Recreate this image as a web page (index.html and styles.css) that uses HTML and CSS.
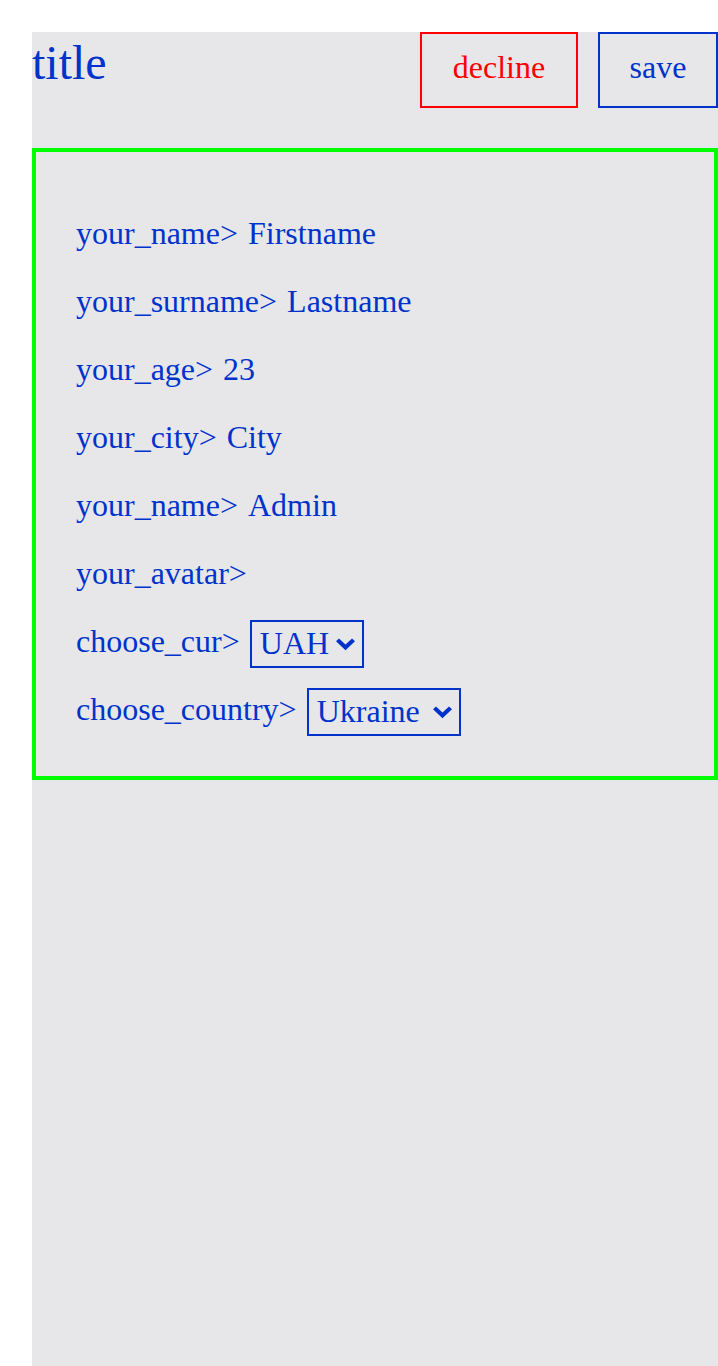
FILE: index.html
```html
<!DOCTYPE html>
<html>
<head>
<meta charset="utf-8">
<link rel="stylesheet" href="styles.css">
</head>
<body>
<div class="page">
  <header class="header">
    <h1 class="title">title</h1>
    <div class="actions">
      <button class="btn btn-decline">decline</button>
      <button class="btn btn-save">save</button>
    </div>
  </header>
  <form class="form">
    <div class="row"><span class="label">your_name&gt;</span><span class="value">Firstname</span></div>
    <div class="row"><span class="label">your_surname&gt;</span><span class="value">Lastname</span></div>
    <div class="row"><span class="label">your_age&gt;</span><span class="value">23</span></div>
    <div class="row"><span class="label">your_city&gt;</span><span class="value">City</span></div>
    <div class="row"><span class="label">your_name&gt;</span><span class="value">Admin</span></div>
    <div class="row"><span class="label">your_avatar&gt;</span></div>
    <div class="row"><span class="label">choose_cur&gt;</span>
      <span class="select-wrap">
        <select class="sel sel-cur"><option>UAH</option><option>USD</option><option>EUR</option></select>
        <svg class="chev" width="19" height="13" viewBox="0 0 19 13"><path d="M0 3.2 L3 0.4 L9.5 6.6 L16 0.4 L19 3.2 L9.5 12.2 Z" fill="#0033cc"/></svg>
      </span>
    </div>
    <div class="row"><span class="label">choose_country&gt;</span>
      <span class="select-wrap">
        <select class="sel sel-country"><option>Ukraine</option><option>Poland</option></select>
        <svg class="chev" width="19" height="13" viewBox="0 0 19 13"><path d="M0 3.2 L3 0.4 L9.5 6.6 L16 0.4 L19 3.2 L9.5 12.2 Z" fill="#0033cc"/></svg>
      </span>
    </div>
  </form>
</div>
</body>
</html>
```
FILE: styles.css
```css
html, body {
  margin: 0;
  padding: 0;
  background: #ffffff;
}
body {
  font-family: "Liberation Serif", "Times New Roman", serif;
  color: #0033cc;
  overflow: hidden;
}
.page {
  margin: 32px 0 0 32px;
  background: #e7e7ea;
  min-height: calc(100vh - 32px);
}
.header {
  display: flex;
  justify-content: space-between;
  align-items: flex-start;
}
.title {
  margin: 3px 0 0 0;
  font-size: 48px;
  font-weight: normal;
  line-height: normal;
}
.actions {
  display: flex;
  gap: 20px;
}
.btn {
  font-family: "Liberation Serif", "Times New Roman", serif;
  font-size: 32px;
  height: 76px;
  background: transparent;
  padding: 0 0 5px 0;
  cursor: pointer;
}
.btn-decline {
  width: 158px;
  color: #ff0000;
  border: 2px solid #ff0000;
}
.btn-save {
  width: 120px;
  color: #0033cc;
  border: 2px solid #0033cc;
}
.form {
  margin-top: 40px;
  border: 4px solid #00ff00;
  padding: 40px;
  font-size: 32px;
}
.row {
  margin-top: 20px;
  height: 48px;
  line-height: 42px;
  display: flex;
  align-items: flex-start;
  gap: 10px;
}
.select-wrap {
  position: relative;
  display: inline-block;
  height: 48px;
}
.sel {
  -webkit-appearance: none;
  appearance: none;
  font-family: "Liberation Serif", "Times New Roman", serif;
  font-size: 32px;
  color: #0033cc;
  background: transparent;
  border: 2px solid #0033cc;
  border-radius: 0;
  height: 48px;
  margin: 0;
  padding: 0 0 3px 8px;
  display: block;
}
.sel-cur { width: 114px; }
.sel-country { width: 154px; }
.chev {
  position: absolute;
  right: 9px;
  top: 18px;
  pointer-events: none;
}
```
